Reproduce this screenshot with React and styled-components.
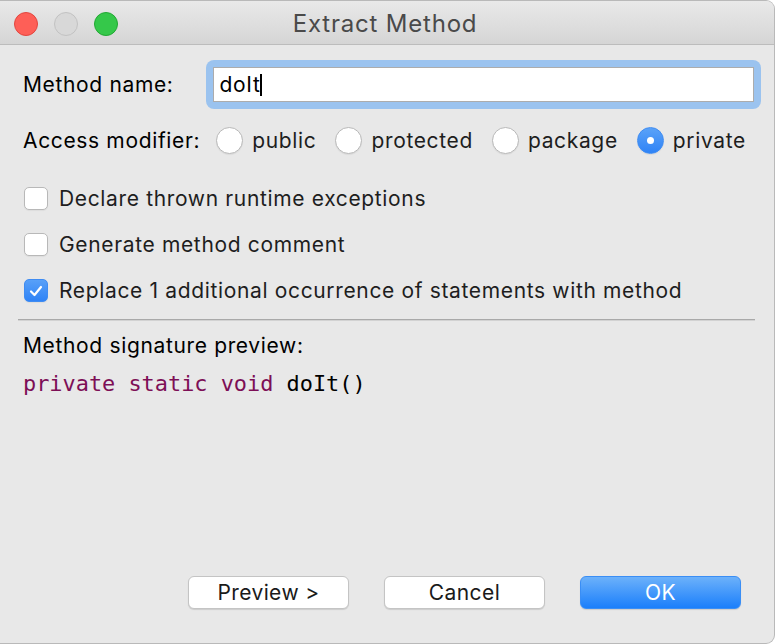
import React from 'react';
import styled, { createGlobalStyle } from 'styled-components';

const GlobalStyle = createGlobalStyle`
  html, body {
    margin: 0;
    padding: 0;
    background: #ffffff;
  }
  body {
    font-family: Inter, "Liberation Sans", sans-serif;
    -webkit-font-smoothing: antialiased;
  }
`;

const Window = styled.div`
  box-sizing: border-box;
  width: 775px;
  height: 644px;
  background: #e8e8e8;
  border: 1px solid #b9b9b9;
  border-left: none;
  border-radius: 0 9px 9px 0;
  display: flex;
  flex-direction: column;
  overflow: hidden;
  color: #1e1e1e;
  font-size: 21px;
`;

const TitleBar = styled.div`
  box-sizing: border-box;
  height: 44px;
  padding-top: 2px;
  border-bottom: 1px solid #bcbcbc;
  background: linear-gradient(#e9e9e9, #d5d5d5);
  display: grid;
  grid-template-columns: 1fr auto 1fr;
  align-items: center;
`;

const Lights = styled.div`
  display: flex;
  gap: 16px;
  padding-left: 14px;
`;

const Light = styled.span`
  box-sizing: border-box;
  width: 24px;
  height: 24px;
  border-radius: 50%;
  background: ${({ $fill }) => $fill};
  border: 1px solid ${({ $edge }) => $edge};
`;

const Title = styled.div`
  font-size: 24px;
  color: #4a4a4a;
  letter-spacing: 0.8px;
  transform: translateX(-2px);
`;

const Content = styled.div`
  flex: 1;
  display: flex;
  flex-direction: column;
  padding: 15px 13px 0 23px;
`;

const NameRow = styled.div`
  display: flex;
  align-items: center;
  gap: 32px;
  height: 49px;
`;

const Label = styled.span`
  font-size: 21px;
  line-height: 25px;
  letter-spacing: 0.65px;
  color: ${({ $dim }) => ($dim ? '#1e1e1e' : '#000')};
  white-space: nowrap;
`;

const FocusRing = styled.div`
  flex: 1;
  padding: 7px;
  border-radius: 8px;
  background: #9bc3ef;
`;

const Field = styled.div`
  box-sizing: border-box;
  height: 35px;
  background: #fff;
  border: 1px solid #acacac;
  display: flex;
  align-items: center;
  padding-left: 6px;
  font-size: 21px;
  letter-spacing: 0.65px;
  color: #000;
`;

const Caret = styled.span`
  display: inline-block;
  width: 2px;
  height: 22px;
  background: #000;
`;

const AccessRow = styled.div`
  display: flex;
  align-items: center;
  margin-top: 18px;
  height: 27px;
`;

const RadioItem = styled.label`
  display: flex;
  align-items: center;
  gap: 9px;
  margin-left: ${({ $first }) => ($first ? '16px' : '19px')};
`;

const RadioCircle = styled.span`
  box-sizing: border-box;
  width: 27px;
  height: 27px;
  border-radius: 50%;
  display: flex;
  align-items: center;
  justify-content: center;
  background: ${({ $on }) => ($on ? 'linear-gradient(#5aa2f8, #2f83f6)' : '#fff')};
  border: 1px solid ${({ $on }) => ($on ? '#3f8cf2' : '#b8b8b8')};
  box-shadow: 0 1px 1px rgba(0, 0, 0, 0.06);

  &::after {
    content: '';
    display: ${({ $on }) => ($on ? 'block' : 'none')};
    width: 7px;
    height: 7px;
    border-radius: 50%;
    background: #fff;
  }
`;

const Checks = styled.div`
  display: flex;
  flex-direction: column;
  gap: 23px;
  margin-top: 33px;
`;

const CheckRow = styled.label`
  display: flex;
  align-items: center;
  gap: 11px;
  height: 23px;
  margin-left: 1px;
`;

const CheckBox = styled.span`
  box-sizing: border-box;
  flex: none;
  width: 24px;
  height: 23px;
  border-radius: 5px;
  display: flex;
  align-items: center;
  justify-content: center;
  background: ${({ $on }) => ($on ? 'linear-gradient(#58a0f8, #2f83f6)' : '#fff')};
  border: 1px solid ${({ $on }) => ($on ? '#3f8cf2' : '#b8b8b8')};
  box-shadow: 0 1px 1px rgba(0, 0, 0, 0.05);
`;

const Separator = styled.div`
  height: 1px;
  background: #a9a9a9;
  margin: 17px 6px 0 -5px;
  border-bottom: 1px solid #d2d2d2;
`;

const PreviewLabel = styled(Label)`
  display: block;
  margin-top: 12px;
`;

const Code = styled.div`
  margin-top: 13px;
  font-family: "DejaVu Sans Mono", "Liberation Mono", monospace;
  font-size: 21.9px;
  line-height: 26px;
  color: #000;
  white-space: pre;
`;

const Keyword = styled.span`
  color: #7d0f56;
`;

const Footer = styled.div`
  margin-top: auto;
  display: flex;
  justify-content: flex-end;
  gap: 35px;
  padding: 0 20px 34px 0;
`;

const Button = styled.button`
  box-sizing: border-box;
  width: 161px;
  height: 33px;
  border-radius: 6px;
  font-family: inherit;
  font-size: 21px;
  letter-spacing: 0.4px;
  padding: 0;
  cursor: pointer;
  color: ${({ $primary }) => ($primary ? '#fff' : '#1a1a1a')};
  background: ${({ $primary }) =>
    $primary ? 'linear-gradient(#6cb1fa, #1b7ffb)' : '#fff'};
  border: 1px solid ${({ $primary }) => ($primary ? '#3a8ef5' : '#c4c4c4')};
  box-shadow: 0 1px 1px rgba(0, 0, 0, 0.12);
`;

const modifiers = ['public', 'protected', 'package', 'private'];

const options = [
  { text: 'Declare thrown runtime exceptions', on: false },
  { text: 'Generate method comment', on: false },
  { text: 'Replace 1 additional occurrence of statements with method', on: true },
];

export default function App() {
  return (
    <>
      <GlobalStyle />
      <Window>
        <TitleBar>
          <Lights>
            <Light $fill="#fe5f57" $edge="#e2463f" />
            <Light $fill="#d8d8d8" $edge="#c2c2c2" />
            <Light $fill="#35c84a" $edge="#22a834" />
          </Lights>
          <Title>Extract Method</Title>
          <span />
        </TitleBar>
        <Content>
          <NameRow>
            <Label>Method name:</Label>
            <FocusRing>
              <Field>
                doIt
                <Caret />
              </Field>
            </FocusRing>
          </NameRow>
          <AccessRow>
            <Label>Access modifier:</Label>
            {modifiers.map((m, i) => (
              <RadioItem key={m} $first={i === 0}>
                <RadioCircle $on={m === 'private'} />
                <Label $dim>{m}</Label>
              </RadioItem>
            ))}
          </AccessRow>
          <Checks>
            {options.map((o) => (
              <CheckRow key={o.text}>
                <CheckBox $on={o.on}>
                  {o.on && (
                    <svg width="14" height="12" viewBox="0 0 14 12">
                      <path
                        d="M2 6.5 L5.5 10 L12 2"
                        fill="none"
                        stroke="#fff"
                        strokeWidth="2.2"
                        strokeLinecap="round"
                        strokeLinejoin="round"
                      />
                    </svg>
                  )}
                </CheckBox>
                <Label $dim>{o.text}</Label>
              </CheckRow>
            ))}
          </Checks>
          <Separator />
          <PreviewLabel>Method signature preview:</PreviewLabel>
          <Code>
            <Keyword>private static void</Keyword> doIt()
          </Code>
          <Footer>
            <Button>Preview &gt;</Button>
            <Button>Cancel</Button>
            <Button $primary>OK</Button>
          </Footer>
        </Content>
      </Window>
    </>
  );
}
